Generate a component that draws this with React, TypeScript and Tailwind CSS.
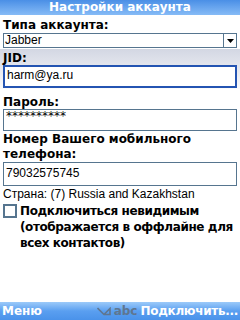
import React from "react";

const F = { fontFamily: '"DejaVu Sans", "Liberation Sans", sans-serif' };

export default function App() {
  return (
    <div className="w-[240px] h-[320px] bg-white flex flex-col overflow-hidden text-black" style={F}>
      <div className="h-[15px] flex items-center justify-center bg-gradient-to-b from-[#4a8fe6] to-[#86bbf6] text-white font-bold text-[12px] leading-[15px]">
        Настройки аккаунта
      </div>
      <div className="px-[3px]">
        <div className="mt-[3px] h-[15px] font-bold text-[12px] leading-[15px]">Типа аккаунта:</div>
        <div className="h-[15px] border border-[#56758f] flex items-stretch">
          <div className="flex-1 pl-[1px] text-[12px] leading-[13px] font-['Liberation_Sans']">Jabber</div>
          <div className="w-[13px] border-l border-[#56758f] flex items-center justify-center">
            <svg width="7" height="4" viewBox="0 0 7 4"><path d="M0 0H7L3.5 4Z" fill="#000" /></svg>
          </div>
        </div>
      </div>
      <div className="mt-[1px] px-[3px] pt-[2px] pb-[1px] bg-gradient-to-b from-[#d3d7e3] to-[#fbfbfc]">
        <div className="h-[14px] font-bold text-[12px] leading-[14px]">JID:</div>
        <div className="h-[23px] border-2 border-[#2454b2] bg-white pl-[2px] text-[12px] leading-[17px] font-['Liberation_Sans']">harm@ya.ru</div>
      </div>
      <div className="px-[3px]">
        <div className="mt-[6px] h-[14px] font-bold text-[12px] leading-[14px]">Пароль:</div>
        <div className="h-[22px] border border-[#56758f] pl-[2px] text-[12px] leading-[13px]">**********</div>
        <div className="mt-[1px] font-bold text-[12px] leading-[15px]">Номер Вашего мобильного<br />телефона:</div>
        <div className="h-[24px] border border-[#56758f] pl-[2px] text-[12px] leading-[20px] font-['Liberation_Sans']">79032575745</div>
        <div className="mt-[1px] h-[14px] text-[12px] leading-[14px] font-['Liberation_Sans']">Страна: (7) Russia and Kazakhstan</div>
        <div className="mt-[2px] flex gap-[3px]">
          <div className="w-[14px] h-[14px] border-2 border-[#56758f] shrink-0 mt-[1px]" />
          <div className="font-bold text-[12px] leading-[16px] whitespace-nowrap tracking-[-0.4px]">Подключиться невидимым<br />(отображается в оффлайне для<br />всех контактов)</div>
        </div>
      </div>
      <div className="flex-1" />
      <div className="h-[18px] flex items-center px-[2px] bg-gradient-to-b from-[#9ccaf9] via-[#5a9ff0] to-[#4a92ea] text-white font-bold text-[12px] leading-[18px]">
        <span>Меню</span>
        <span className="flex-1" />
        <svg width="14" height="9" viewBox="0 0 14 9" className="mr-[3px]"><path d="M0.5 1L7 7.5H13V1.5L7 7.5" fill="none" stroke="#5f7690" strokeWidth="1.6" /></svg>
        <span className="text-[#5f7690] mr-[3px]">abc</span>
        <span className="tracking-[-0.3px]">Подключить...</span>
      </div>
    </div>
  );
}
